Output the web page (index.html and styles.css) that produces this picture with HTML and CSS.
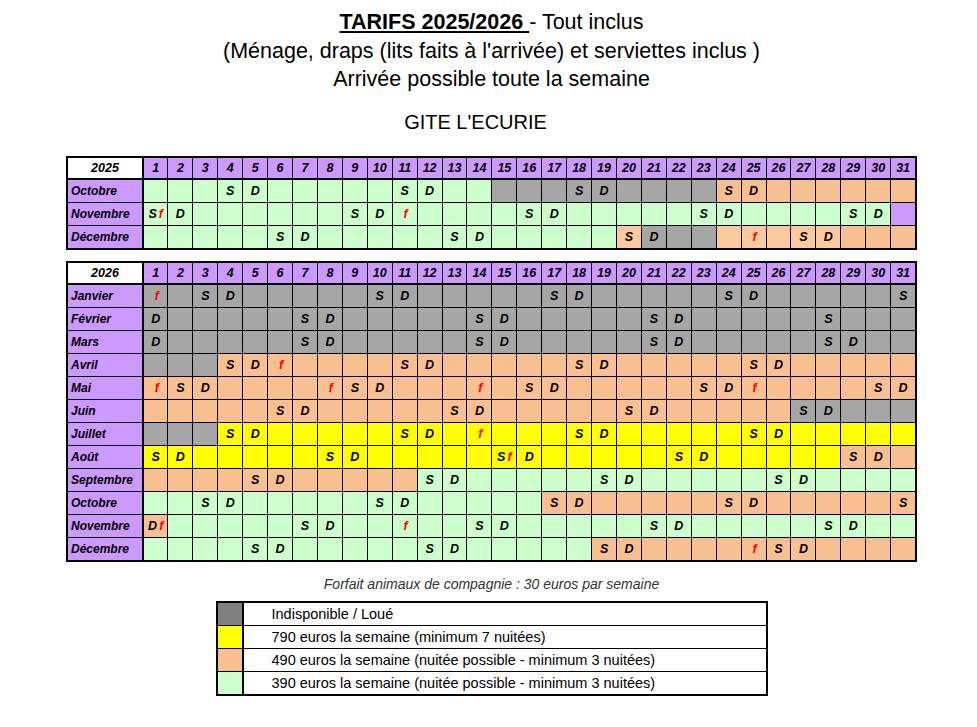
FILE: index.html
```html
<!DOCTYPE html>
<html lang="fr">
<head>
<meta charset="utf-8">
<title>Tarifs 2025/2026 - Gîte L'Ecurie</title>
<link rel="stylesheet" href="styles.css">
</head>
<body>
<div class="page">
  <div class="title">
    <div><span class="title-main">TARIFS 2025/2026 </span> - Tout inclus</div>
    <div>(Ménage, draps (lits faits à l'arrivée) et serviettes inclus )</div>
    <div>Arrivée possible toute la semaine</div>
  </div>
  <div class="gite">GITE L'ECURIE</div>

  <table class="cal">
    <colgroup><col class="c-m"><col span="31"></colgroup>
    <tr class="hd"><th class="yr">2025</th><th>1</th><th>2</th><th>3</th><th>4</th><th>5</th><th>6</th><th>7</th><th>8</th><th>9</th><th>10</th><th>11</th><th>12</th><th>13</th><th>14</th><th>15</th><th>16</th><th>17</th><th>18</th><th>19</th><th>20</th><th>21</th><th>22</th><th>23</th><th>24</th><th>25</th><th>26</th><th>27</th><th>28</th><th>29</th><th>30</th><th>31</th></tr>
    <tr class="v"><td class="m">Octobre</td><td></td><td></td><td></td><td>S</td><td>D</td><td></td><td></td><td></td><td></td><td></td><td>S</td><td>D</td><td></td><td></td><td class="g"></td><td class="g"></td><td class="g"></td><td class="g">S</td><td class="g">D</td><td class="g"></td><td class="g"></td><td class="g"></td><td class="g"></td><td class="o">S</td><td class="o">D</td><td class="o"></td><td class="o"></td><td class="o"></td><td class="o"></td><td class="o"></td><td class="o"></td></tr>
    <tr class="v"><td class="m">Novembre</td><td>S<span class="f">f</span></td><td>D</td><td></td><td></td><td></td><td></td><td></td><td></td><td>S</td><td>D</td><td><span class="f">f</span></td><td></td><td></td><td></td><td></td><td>S</td><td>D</td><td></td><td></td><td></td><td></td><td></td><td>S</td><td>D</td><td></td><td></td><td></td><td></td><td>S</td><td>D</td><td class="p"></td></tr>
    <tr class="v"><td class="m">Décembre</td><td></td><td></td><td></td><td></td><td></td><td>S</td><td>D</td><td></td><td></td><td></td><td></td><td></td><td>S</td><td>D</td><td></td><td></td><td></td><td></td><td></td><td class="l">S</td><td class="g">D</td><td class="g"></td><td class="g"></td><td class="l"></td><td class="l"><span class="f">f</span></td><td class="l"></td><td class="l">S</td><td class="l">D</td><td class="o"></td><td class="o"></td><td class="o"></td></tr>
  </table>

  <table class="cal cal2">
    <colgroup><col class="c-m"><col span="31"></colgroup>
    <tr class="hd"><th class="yr">2026</th><th>1</th><th>2</th><th>3</th><th>4</th><th>5</th><th>6</th><th>7</th><th>8</th><th>9</th><th>10</th><th>11</th><th>12</th><th>13</th><th>14</th><th>15</th><th>16</th><th>17</th><th>18</th><th>19</th><th>20</th><th>21</th><th>22</th><th>23</th><th>24</th><th>25</th><th>26</th><th>27</th><th>28</th><th>29</th><th>30</th><th>31</th></tr>
    <tr class="g"><td class="m">Janvier</td><td><span class="f">f</span></td><td></td><td>S</td><td>D</td><td></td><td></td><td></td><td></td><td></td><td>S</td><td>D</td><td></td><td></td><td></td><td></td><td></td><td>S</td><td>D</td><td></td><td></td><td></td><td></td><td></td><td>S</td><td>D</td><td></td><td></td><td></td><td></td><td></td><td>S</td></tr>
    <tr class="g"><td class="m">Février</td><td>D</td><td></td><td></td><td></td><td></td><td></td><td>S</td><td>D</td><td></td><td></td><td></td><td></td><td></td><td>S</td><td>D</td><td></td><td></td><td></td><td></td><td></td><td>S</td><td>D</td><td></td><td></td><td></td><td></td><td></td><td>S</td><td></td><td></td><td></td></tr>
    <tr class="g"><td class="m">Mars</td><td>D</td><td></td><td></td><td></td><td></td><td></td><td>S</td><td>D</td><td></td><td></td><td></td><td></td><td></td><td>S</td><td>D</td><td></td><td></td><td></td><td></td><td></td><td>S</td><td>D</td><td></td><td></td><td></td><td></td><td></td><td>S</td><td>D</td><td></td><td></td></tr>
    <tr class="o"><td class="m">Avril</td><td class="g"></td><td class="g"></td><td class="g"></td><td>S</td><td>D</td><td><span class="f">f</span></td><td></td><td></td><td></td><td></td><td>S</td><td>D</td><td></td><td></td><td></td><td></td><td></td><td>S</td><td>D</td><td></td><td></td><td></td><td></td><td></td><td>S</td><td>D</td><td></td><td></td><td></td><td></td><td></td></tr>
    <tr class="o"><td class="m">Mai</td><td><span class="f">f</span></td><td>S</td><td>D</td><td></td><td></td><td></td><td></td><td><span class="f">f</span></td><td>S</td><td>D</td><td></td><td></td><td></td><td><span class="f">f</span></td><td></td><td>S</td><td>D</td><td></td><td></td><td></td><td></td><td></td><td>S</td><td>D</td><td><span class="f">f</span></td><td></td><td></td><td></td><td></td><td>S</td><td>D</td></tr>
    <tr class="o"><td class="m">Juin</td><td></td><td></td><td></td><td></td><td></td><td>S</td><td>D</td><td></td><td></td><td></td><td></td><td></td><td>S</td><td>D</td><td></td><td></td><td></td><td></td><td></td><td>S</td><td>D</td><td></td><td></td><td></td><td></td><td></td><td class="g">S</td><td class="g">D</td><td class="g"></td><td class="g"></td><td class="g"></td></tr>
    <tr class="y"><td class="m">Juillet</td><td class="g"></td><td class="g"></td><td class="g"></td><td>S</td><td>D</td><td></td><td></td><td></td><td></td><td></td><td>S</td><td>D</td><td></td><td><span class="f">f</span></td><td></td><td></td><td></td><td>S</td><td>D</td><td></td><td></td><td></td><td></td><td></td><td>S</td><td>D</td><td></td><td></td><td></td><td></td><td></td></tr>
    <tr class="y"><td class="m">Août</td><td>S</td><td>D</td><td></td><td></td><td></td><td></td><td></td><td>S</td><td>D</td><td></td><td></td><td></td><td></td><td></td><td>S<span class="f">f</span></td><td>D</td><td></td><td></td><td></td><td></td><td></td><td>S</td><td>D</td><td></td><td></td><td></td><td></td><td></td><td class="o">S</td><td class="o">D</td><td class="o"></td></tr>
    <tr class="v"><td class="m">Septembre</td><td class="o"></td><td class="o"></td><td class="o"></td><td class="o"></td><td class="o">S</td><td class="o">D</td><td class="o"></td><td class="o"></td><td class="o"></td><td class="o"></td><td class="o"></td><td>S</td><td>D</td><td></td><td></td><td></td><td></td><td></td><td>S</td><td>D</td><td></td><td></td><td></td><td></td><td></td><td>S</td><td>D</td><td></td><td></td><td></td><td></td></tr>
    <tr class="o"><td class="m">Octobre</td><td class="v"></td><td class="v"></td><td class="v">S</td><td class="v">D</td><td class="v"></td><td class="v"></td><td class="v"></td><td class="v"></td><td class="v"></td><td class="v">S</td><td class="v">D</td><td class="v"></td><td class="v"></td><td class="v"></td><td class="v"></td><td class="v"></td><td>S</td><td>D</td><td></td><td></td><td></td><td></td><td></td><td>S</td><td>D</td><td></td><td></td><td></td><td></td><td></td><td>S</td></tr>
    <tr class="v"><td class="m">Novembre</td><td class="o">D<span class="f">f</span></td><td></td><td></td><td></td><td></td><td></td><td>S</td><td>D</td><td></td><td></td><td><span class="f">f</span></td><td></td><td></td><td>S</td><td>D</td><td></td><td></td><td></td><td></td><td></td><td>S</td><td>D</td><td></td><td></td><td></td><td></td><td></td><td>S</td><td>D</td><td></td><td></td></tr>
    <tr class="v"><td class="m">Décembre</td><td></td><td></td><td></td><td></td><td>S</td><td>D</td><td></td><td></td><td></td><td></td><td></td><td>S</td><td>D</td><td></td><td></td><td></td><td></td><td></td><td class="o">S</td><td class="o">D</td><td class="o"></td><td class="o"></td><td class="o"></td><td class="o"></td><td class="o"><span class="f">f</span></td><td class="o">S</td><td class="o">D</td><td class="o"></td><td class="o"></td><td class="o"></td><td class="o"></td></tr>
  </table>

  <p class="note">Forfait animaux de compagnie : 30 euros par semaine</p>

  <table class="legend">
    <tr><td class="sw sw-g"></td><td class="lt">Indisponible / Loué</td></tr>
    <tr><td class="sw sw-y"></td><td class="lt">790 euros la semaine (minimum 7 nuitées)</td></tr>
    <tr><td class="sw sw-o"></td><td class="lt">490 euros la semaine (nuitée possible - minimum 3 nuitées)</td></tr>
    <tr><td class="sw sw-v"></td><td class="lt">390 euros la semaine (nuitée possible - minimum 3 nuitées)</td></tr>
  </table>
</div>
</body>
</html>
```

FILE: styles.css
```css
body {
  margin: 0;
  background: #fff;
  color: #000;
  font-family: "Liberation Sans", Arial, sans-serif;
}

.page {
  width: 851px;
  margin-left: 66px;
  padding-top: 8px;
}

.title {
  text-align: center;
  font-size: 21.5px;
  line-height: 28.5px;
}

.title-main {
  font-weight: bold;
  text-decoration: underline;
}

.gite {
  text-align: center;
  font-size: 20px;
  line-height: 24px;
  margin-top: 16px;
  padding-right: 32px;
}

.cal {
  border-collapse: collapse;
  table-layout: fixed;
  width: 851px;
  border: 2px solid #000;
  margin-top: 22px;
  font-size: 12.5px;
  font-weight: bold;
  font-style: italic;
}

.cal2 {
  margin-top: 11px;
}

.cal .c-m {
  width: 76px;
}

.cal th,
.cal td {
  border: 1px solid #000;
  height: 22px;
  padding: 0;
  text-align: center;
  vertical-align: middle;
}

.cal .hd th {
  height: 20px;
  background: #cc99ff;
  border-bottom: 2px solid #000;
}

.cal .hd th.yr {
  background: #fff;
}

.cal th.yr,
.cal td.m {
  border-right: 2px solid #000;
}

.cal td.m {
  background: #cc99ff;
  text-align: left;
  padding-left: 3px;
  font-size: 12px;
}

.cal tr.v { background: #ccffcc; }
.cal tr.g { background: #a6a6a6; }
.cal tr.o { background: #f8bf90; }
.cal tr.y { background: #ffff00; }

.cal td.v { background: #ccffcc; }
.cal td.g { background: #a6a6a6; }
.cal td.o { background: #f8bf90; }
.cal td.l { background: #fcca9e; }
.cal td.y { background: #ffff00; }
.cal td.p { background: #cc99ff; }

.f {
  color: #ff0000;
  margin-left: 2px;
}

.note {
  margin: 14px 0 0;
  text-align: center;
  font-size: 14px;
  line-height: 16px;
  font-style: italic;
  color: #333;
}

.legend {
  border-collapse: collapse;
  width: 552px;
  margin: 9px auto 0;
  border: 2px solid #000;
  font-family: "Comic Sans MS", "Liberation Sans", sans-serif;
  font-size: 14.5px;
}

.legend td {
  border: 1px solid #000;
  height: 22px;
  padding: 0;
}

.legend .sw {
  width: 24px;
  border-right: 2px solid #000;
}

.legend .lt {
  padding-left: 28px;
}

.sw-g { background: #808080; }
.sw-y { background: #ffff00; }
.sw-o { background: #f8bf90; }
.sw-v { background: #ccffcc; }
```
